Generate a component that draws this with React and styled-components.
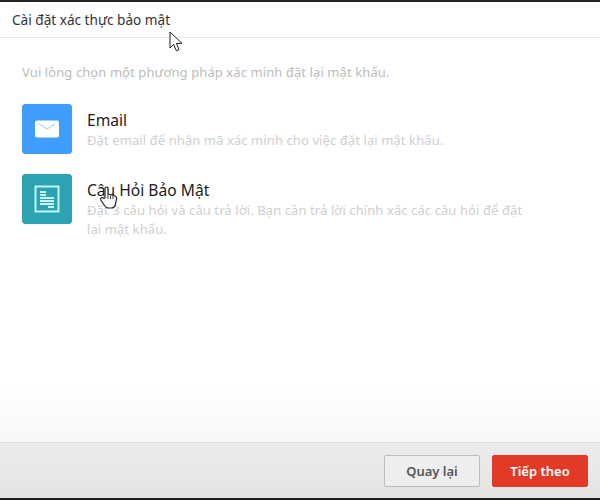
import React from 'react'
import styled, { createGlobalStyle } from 'styled-components'

const GlobalStyle = createGlobalStyle`
  html, body {
    margin: 0;
    padding: 0;
    background: #fff;
  }
  * {
    box-sizing: border-box;
  }
`

const Page = styled.div`
  background: #222;
  display: flex;
  flex-direction: column;
  font-family: "Noto Sans", "Open Sans", sans-serif;
  height: 500px;
  overflow: hidden;
  padding: 2px 0;
  position: relative;
  width: 600px;
`

const Header = styled.div`
  align-items: center;
  background: #fff;
  border-bottom: 1px solid #e6e6e6;
  color: #333;
  display: flex;
  flex-shrink: 0;
  font-size: 13.6px;
  height: 36px;
  padding: 0 12px;
`

const Body = styled.div`
  background: linear-gradient(to bottom, #fff 0, #fff 350px, #f8f8f8 100%);
  flex: 1;
  padding: 25px 22px 0;
`

const Hint = styled.div`
  color: #bcbcbc;
  font-size: 13px;
  letter-spacing: 0.09px;
  line-height: 18px;
  margin-bottom: 23px;
`

const Options = styled.div`
  display: flex;
  flex-direction: column;
  gap: 20px;
`

const Option = styled.div`
  display: flex;
  gap: 15px;
`

const IconBox = styled.div`
  align-items: center;
  background: ${props => props.color};
  border-radius: 4px;
  box-shadow: 0 0 1px rgba(0, 0, 0, 0.3);
  display: flex;
  flex-shrink: 0;
  height: 50px;
  justify-content: center;
  width: 50px;
`

const OptionText = styled.div`
  padding-top: 7px;
  width: 440px;
`

const OptionTitle = styled.div`
  color: #1c1c1c;
  font-size: 15.6px;
  line-height: 18px;
  margin-bottom: 2px;
`

const OptionDesc = styled.div`
  color: #cfcfcf;
  font-size: 13px;
  letter-spacing: 0.09px;
  line-height: 19px;
`

const Footer = styled.div`
  align-items: center;
  background: linear-gradient(to bottom, #ececec, #e4e4e4);
  border-top: 1px solid #dcdcdc;
  display: flex;
  flex-shrink: 0;
  gap: 12px;
  height: 56px;
  justify-content: flex-end;
  padding: 0 12px 0 0;
`

const Button = styled.div`
  align-items: center;
  background: ${props => (props.primary ? '#e23a26' : '#eeeeee')};
  border: 1px solid ${props => (props.primary ? '#e23a26' : '#bdbdbd')};
  border-radius: 2px;
  color: ${props => (props.primary ? '#fff' : '#555')};
  display: flex;
  font-size: 13px;
  font-weight: 600;
  height: 32px;
  justify-content: center;
  width: 96px;
`

const Cursor = styled.svg`
  left: ${props => props.x}px;
  position: absolute;
  top: ${props => props.y}px;
`

const MailIcon = () => (
  <svg width="26" height="18" viewBox="0 0 26 18">
    <rect x="1" y="0.5" width="24" height="17" rx="2" fill="#fff" />
    <path d="M5 4 L13 9 L21 4" fill="none" stroke="#9cc4ee" strokeWidth="1" />
  </svg>
)

const NoteIcon = () => (
  <svg width="26" height="28" viewBox="0 0 26 28">
    <rect x="1.5" y="1.5" width="23" height="25" fill="none" stroke="#c6f5f7" strokeWidth="2" />
    <path d="M6 7 H12 M6 10 H12 M6 13 H20 M6 16 H20 M6 19 H20 M14 22 H20" stroke="#c6f5f7" strokeWidth="2" />
  </svg>
)

export default function App() {
  return (
    <Page>
      <GlobalStyle />
      <Header>Cài đặt xác thực bảo mật</Header>
      <Body>
        <Hint>Vui lòng chọn một phương pháp xác minh đặt lại mật khẩu.</Hint>
        <Options>
          <Option>
            <IconBox color="#3f9dfb">
              <MailIcon />
            </IconBox>
            <OptionText>
              <OptionTitle>Email</OptionTitle>
              <OptionDesc>Đặt email để nhận mã xác minh cho việc đặt lại mật khẩu.</OptionDesc>
            </OptionText>
          </Option>
          <Option>
            <IconBox color="#2ba3b3">
              <NoteIcon />
            </IconBox>
            <OptionText>
              <OptionTitle>Câu Hỏi Bảo Mật</OptionTitle>
              <OptionDesc>
                Đặt 3 câu hỏi và câu trả lời. Bạn cần trả lời chính xác các câu hỏi để đặt lại mật khẩu.
              </OptionDesc>
            </OptionText>
          </Option>
        </Options>
      </Body>
      <Footer>
        <Button>Quay lại</Button>
        <Button primary>Tiếp theo</Button>
      </Footer>
      {/* mouse pointers caught in the capture */}
      <Cursor x={169} y={31} width="14" height="21" viewBox="0 0 14 21">
        <path d="M1 1 V17 L4.7 13.4 L7.4 19.8 L10 18.6 L7.4 12.4 H13 Z" fill="#fff" stroke="#222" strokeWidth="1" />
      </Cursor>
      <Cursor x={99} y={186} width="19" height="23" viewBox="0 0 19 23">
        <path
          d="M6 12 V2.5 C6 0.5 9 0.5 9 2.5 V8 L15 9.5 C17 10 18 11 17.5 13.5 L16.5 18 C16 20.5 15 22 12.5 22 H9.5 C7.5 22 6.5 21 5.5 19.5 L1.8 14 C0.8 12 3.5 10.5 5 12.5 Z"
          fill="#fff"
          stroke="#222"
          strokeWidth="1.2"
        />
        <path d="M9 9 V13 M11.5 9.5 V13 M14 10 V13" stroke="#222" strokeWidth="0.9" />
      </Cursor>
    </Page>
  )
}
